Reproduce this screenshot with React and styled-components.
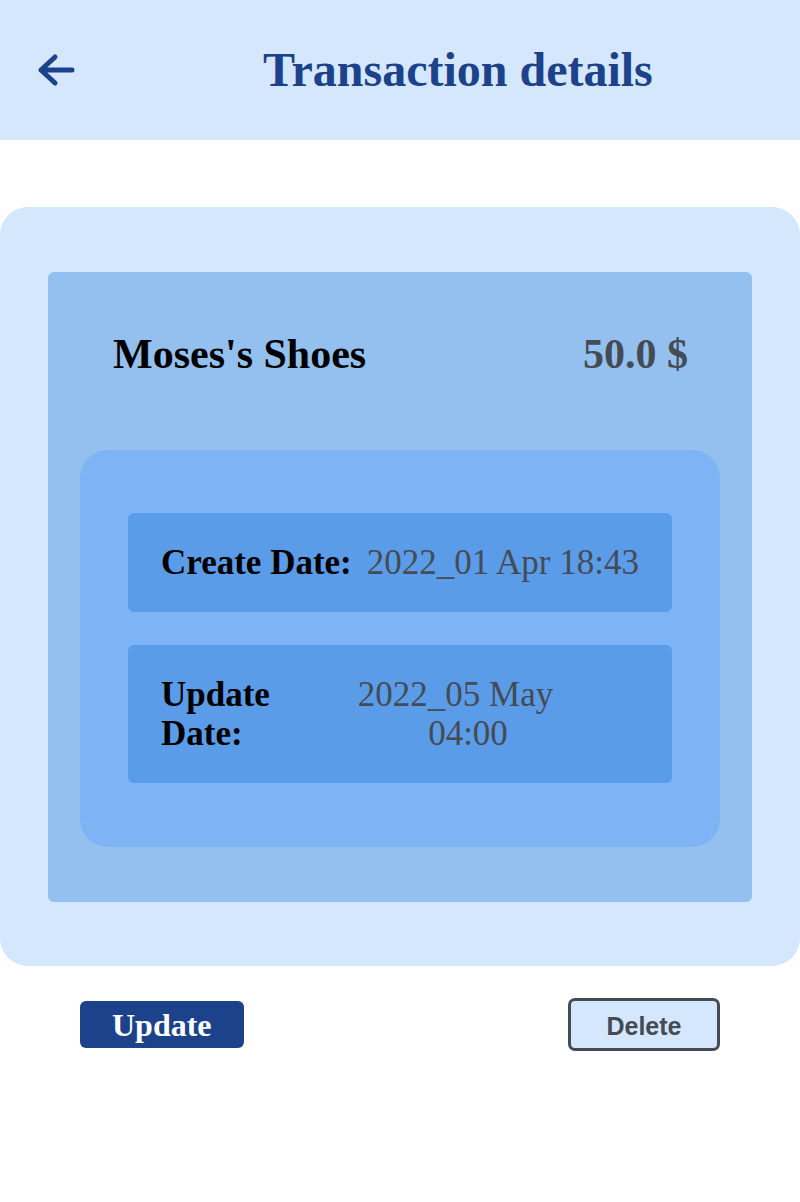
import React from "react";
import styled, { createGlobalStyle } from "styled-components";

const GlobalStyle = createGlobalStyle`
  html, body {
    margin: 0;
    padding: 0;
    background: #ffffff;
    font-family: "Liberation Serif", "Times New Roman", serif;
  }
  * { box-sizing: border-box; }
`;

const Page = styled.div`
  width: 800px;
  min-height: 1202px;
  background: #ffffff;
`;

const Header = styled.header`
  height: 140px;
  display: flex;
  align-items: center;
  gap: 187px;
  padding-left: 36px;
  background: #d4e7fc;
`;

const BackButton = styled.button`
  display: flex;
  padding: 0;
  border: none;
  background: transparent;
  cursor: pointer;
  color: #1b428a;
`;

const Title = styled.h1`
  margin: 0;
  font-size: 48px;
  line-height: 54px;
  font-weight: 700;
  color: #1b428a;
`;

const OuterCard = styled.section`
  margin-top: 67px;
  padding: 65px 48px 64px;
  background: #d4e7fc;
  border-radius: 28px;
`;

const InnerCard = styled.div`
  padding: 59px 32px 55px;
  background: #94c0f0;
  border-radius: 6px;
`;

const NameRow = styled.div`
  display: flex;
  justify-content: space-between;
  align-items: baseline;
  padding: 0 32px 0 33px;
  font-size: 42px;
  line-height: 46px;
  font-weight: 700;
`;

const Merchant = styled.span`
  color: #000000;
`;

const Amount = styled.span`
  color: #454b54;
`;

const DetailsBox = styled.div`
  margin-top: 73px;
  padding: 63px 48px 64px;
  display: flex;
  flex-direction: column;
  gap: 33px;
  background: #7eb4f5;
  border-radius: 28px;
`;

const DetailRow = styled.div`
  display: grid;
  grid-template-columns: ${(p) => p.$cols};
  justify-content: space-between;
  align-items: baseline;
  padding: 30px 33px;
  background: #5a9ce8;
  border-radius: 6px;
  font-size: 35px;
  line-height: 39px;
`;

const Label = styled.span`
  font-weight: 700;
  color: #000000;
`;

const Value = styled.span`
  color: #454b54;
  text-align: center;
  text-indent: ${(p) => p.$indent || "0px"};
`;

const Actions = styled.div`
  margin-top: 32px;
  padding: 0 80px;
  display: flex;
  justify-content: space-between;
  align-items: center;
`;

const UpdateButton = styled.button`
  height: 47px;
  padding: 0 32px;
  border: none;
  border-radius: 6px;
  background: #1b428a;
  color: #ffffff;
  font-family: "Liberation Serif", "Times New Roman", serif;
  font-size: 32px;
  font-weight: 700;
  line-height: 1;
  cursor: pointer;
`;

const DeleteButton = styled.button`
  height: 53px;
  width: 152px;
  padding: 3px 0 0;
  border: 3px solid #454b54;
  border-radius: 7px;
  background: #d4e7fc;
  color: #454b54;
  font-family: "Liberation Sans", Arial, sans-serif;
  font-size: 25px;
  font-weight: 700;
  cursor: pointer;
`;

const ArrowLeft = () => (
  <svg width="40" height="40" viewBox="0 0 40 40" fill="none" aria-hidden="true">
    <path
      d="M36 20H5M19 7L5 20l14 13"
      stroke="currentColor"
      strokeWidth="5"
      strokeLinecap="round"
      strokeLinejoin="round"
    />
  </svg>
);

export default function App() {
  return (
    <Page>
      <GlobalStyle />
      <Header>
        <BackButton aria-label="Back">
          <ArrowLeft />
        </BackButton>
        <Title>Transaction details</Title>
      </Header>
      <OuterCard>
        <InnerCard>
          <NameRow>
            <Merchant>Moses's Shoes</Merchant>
            <Amount>50.0 $</Amount>
          </NameRow>
          <DetailsBox>
            <DetailRow $cols="auto auto">
              <Label>Create Date:</Label>
              <Value>2022_01 Apr 18:43</Value>
            </DetailRow>
            <DetailRow $cols="197px 220px 1fr">
              <Label>Update Date:</Label>
              <Value $indent="-25px">2022_05 May 04:00</Value>
            </DetailRow>
          </DetailsBox>
        </InnerCard>
      </OuterCard>
      <Actions>
        <UpdateButton>Update</UpdateButton>
        <DeleteButton>Delete</DeleteButton>
      </Actions>
    </Page>
  );
}
